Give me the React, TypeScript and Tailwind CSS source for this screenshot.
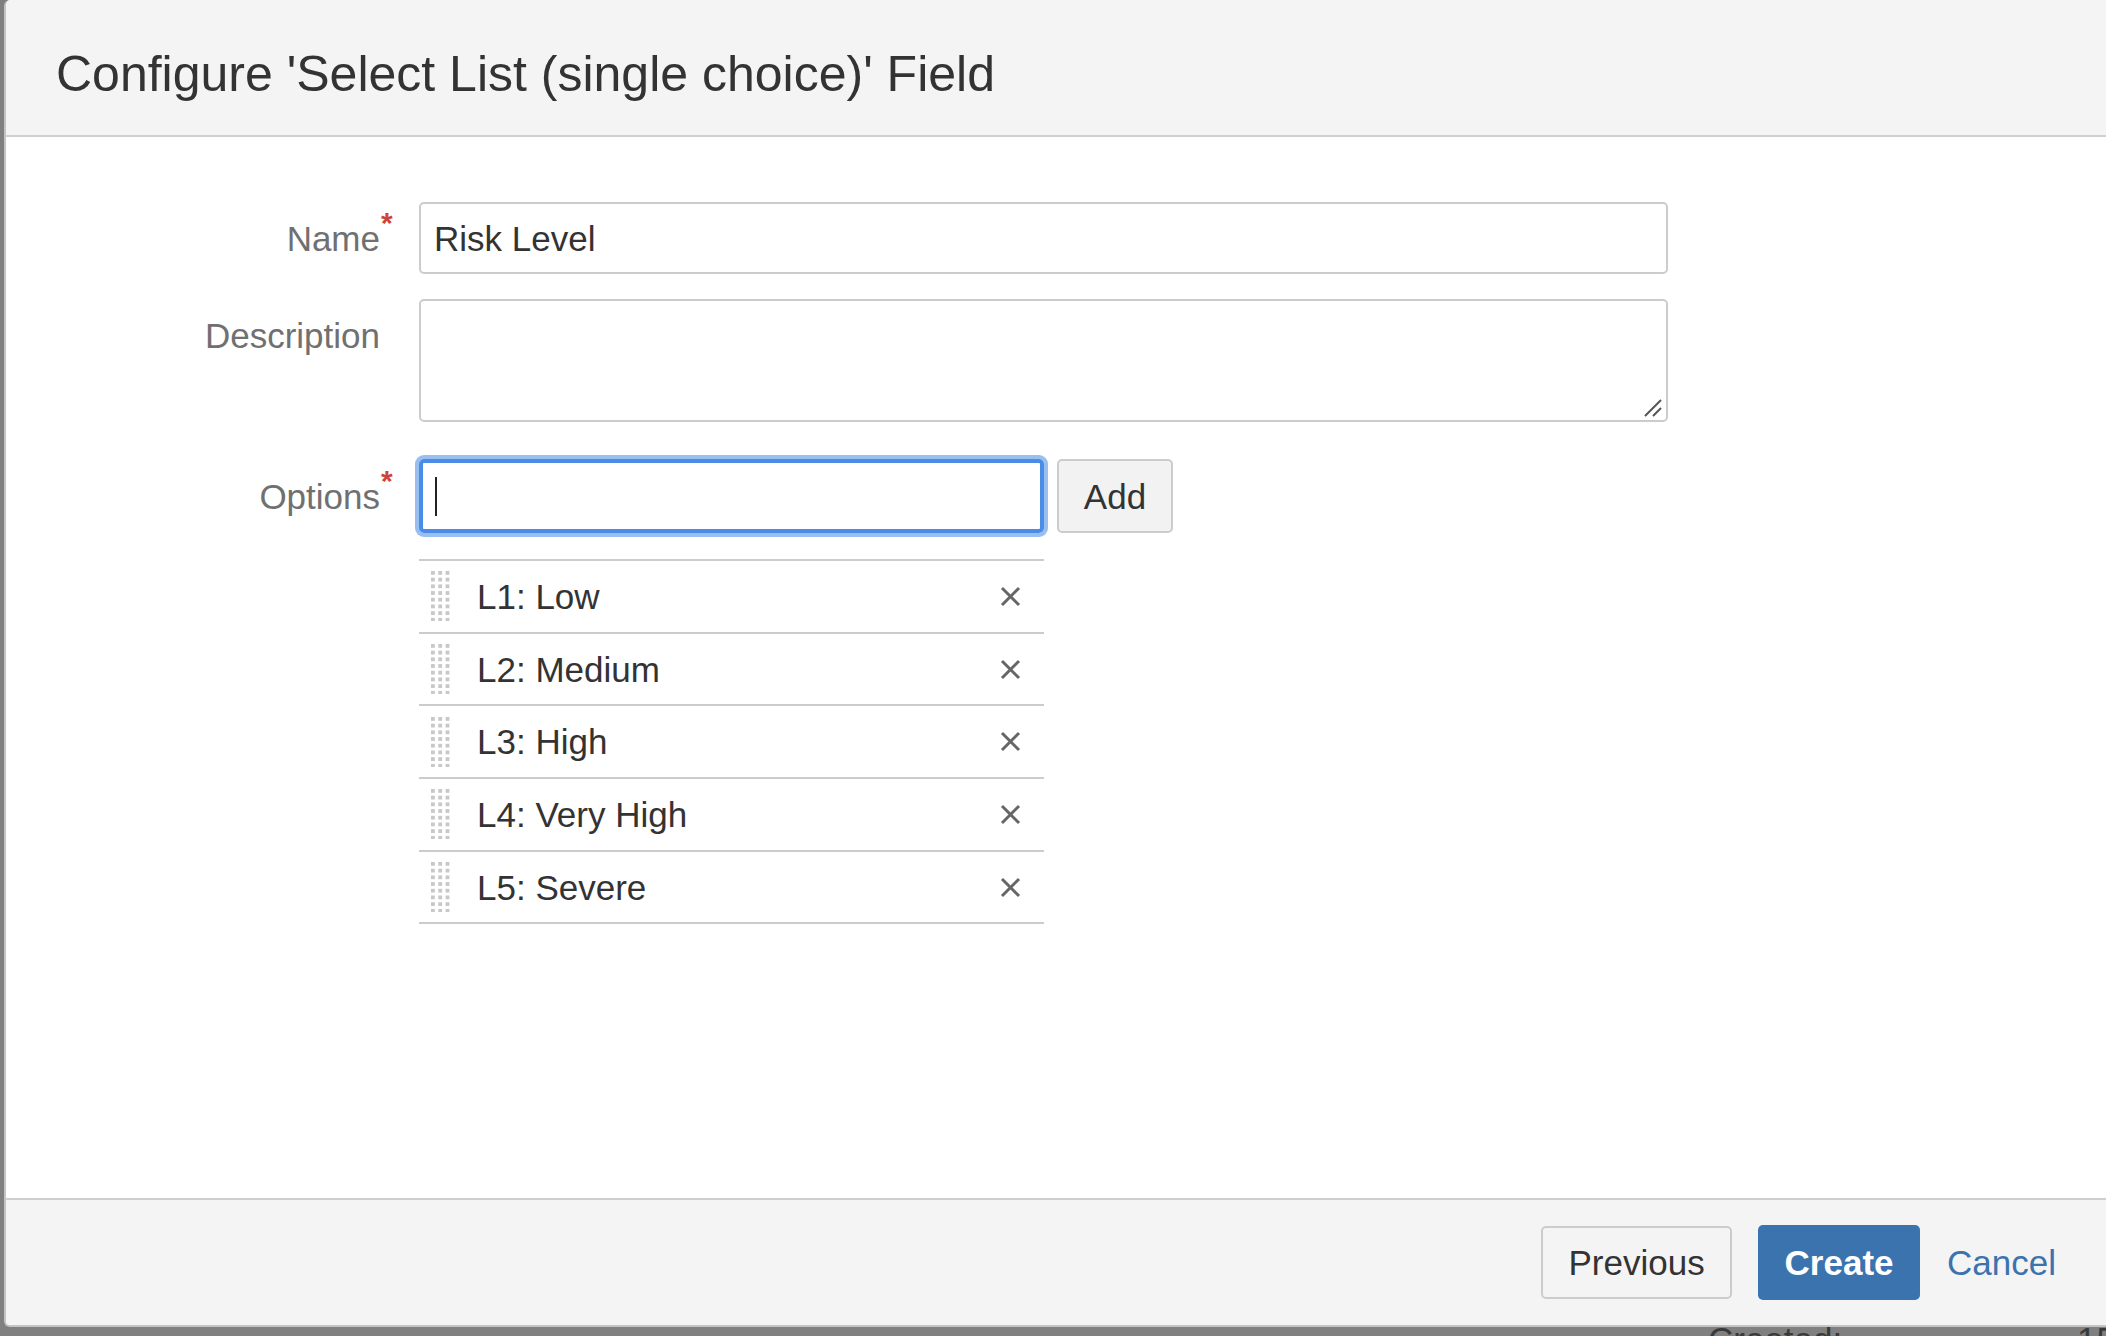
const font = "font-[family-name:'Liberation_Sans',Arial,sans-serif]"

const options = ['L1: Low', 'L2: Medium', 'L3: High', 'L4: Very High', 'L5: Severe']

function DragHandle() {
  const cols = [0, 7.3, 14.6]
  const rows = [0, 1, 2, 3, 4, 5, 6, 7]
  return (
    <svg width="20" height="50" viewBox="0 0 20 50" className="shrink-0">
      {rows.map((r) =>
        cols.map((c) => (
          <rect key={`${r}-${c}`} x={c} y={r * 6.7} width="3.8" height="3.8" fill="#c8c8c8" />
        ))
      )}
    </svg>
  )
}

function CloseIcon() {
  return (
    <svg width="21" height="21" viewBox="0 0 21 21" className="shrink-0">
      <path d="M2 2 L19 19 M19 2 L2 19" stroke="#666666" strokeWidth="3" fill="none" />
    </svg>
  )
}

function Label({ text, required, height }: { text: string; required?: boolean; height: string }) {
  return (
    <div className={`w-[374px] shrink-0 flex items-center justify-end ${height}`}>
      <span className="relative text-[35px] text-[#707070] leading-none">
        {text}
        {required && (
          <span className="absolute left-full top-[-13px] ml-[1px] text-[30px] font-bold text-[#d04437] leading-none">*</span>
        )}
      </span>
    </div>
  )
}

export default function App() {
  return (
    <div className={`w-[2106px] h-[1336px] bg-[#808080] overflow-hidden flex flex-col ${font}`}>
      <div className="ml-[4px] w-[2102px] h-[1327px] shrink-0 flex flex-col bg-white rounded-tl-[6px] rounded-bl-[6px] border-l-2 border-b-2 border-[#c4c4c4] overflow-hidden">
        {/* Header */}
        <div className="h-[137px] shrink-0 bg-[#f4f4f4] border-b-2 border-[#cfcfcf] flex items-center pl-[50px] pt-[13px]">
          <h2 className="text-[50px] text-[#333333] leading-none">Configure 'Select List (single choice)' Field</h2>
        </div>

        {/* Body */}
        <div className="flex-1 pt-[65px]">
          <div className="flex items-start">
            <Label text="Name" required height="h-[72px]" />
            <div className="ml-[39px] w-[1249px] h-[72px] border-2 border-[#cccccc] rounded-[5px] flex items-center pl-[13px]">
              <span className="text-[35px] text-[#333333] leading-none">Risk Level</span>
            </div>
          </div>

          <div className="flex items-start mt-[25px]">
            <Label text="Description" height="h-[72px]" />
            <div className="relative ml-[39px] w-[1249px] h-[123px] border-2 border-[#cccccc] rounded-[5px]">
              <svg width="22" height="20" viewBox="0 0 22 20" className="absolute right-[2px] bottom-[2px]">
                <path d="M3 18 L19 2 M11 18 L19 10" stroke="#555555" strokeWidth="2" fill="none" />
              </svg>
            </div>
          </div>

          <div className="flex items-start mt-[37px]">
            <Label text="Options" required height="h-[74px]" />
            <div className="ml-[39px] flex flex-col">
              <div className="flex items-start">
                <div className="w-[625px] h-[74px] border-[4px] border-[#4a8ce6] rounded-[5px] shadow-[0_0_0_4px_rgba(110,162,234,0.7)] flex items-center pl-[12px]">
                  <span className="w-[2px] h-[39px] bg-[#222222]" />
                </div>
                <button className="ml-[13px] w-[116px] h-[74px] bg-[#f2f2f2] border-2 border-[#cccccc] rounded-[5px] text-[35px] text-[#333333] leading-none">
                  Add
                </button>
              </div>

              <ul className="mt-[26px] w-[625px] border-t-2 border-[#cccccc]">
                {options.map((o) => (
                  <li key={o} className="h-[72.7px] border-b-2 border-[#cccccc] flex items-center pl-[12px] pr-[23px]">
                    <DragHandle />
                    <span className="ml-[26px] flex-1 text-[35px] text-[#333333] leading-none">{o}</span>
                    <CloseIcon />
                  </li>
                ))}
              </ul>
            </div>
          </div>
        </div>

        {/* Footer */}
        <div className="h-[127px] shrink-0 bg-[#f4f4f4] border-t-2 border-[#cfcfcf] flex items-center justify-end pr-[50px]">
          <button className="w-[191px] h-[73px] bg-[#f4f4f4] border-2 border-[#cccccc] rounded-[5px] text-[35px] text-[#333333] leading-none">
            Previous
          </button>
          <button className="ml-[26px] w-[162px] h-[75px] bg-[#3b73af] rounded-[5px] text-[35px] font-bold text-white leading-none">
            Create
          </button>
          <span className="ml-[27px] text-[35px] text-[#3b73af] leading-none">Cancel</span>
        </div>
      </div>

      {/* page content peeking below the dialog */}
      <div className="h-[9px] overflow-hidden flex text-[35px] leading-none text-[#3a3a3a]">
        <span className="ml-[1708px] -mt-[5px]">Created:</span>
        <span className="ml-auto -mt-[5px] -mr-[10px]">15</span>
      </div>
    </div>
  )
}
